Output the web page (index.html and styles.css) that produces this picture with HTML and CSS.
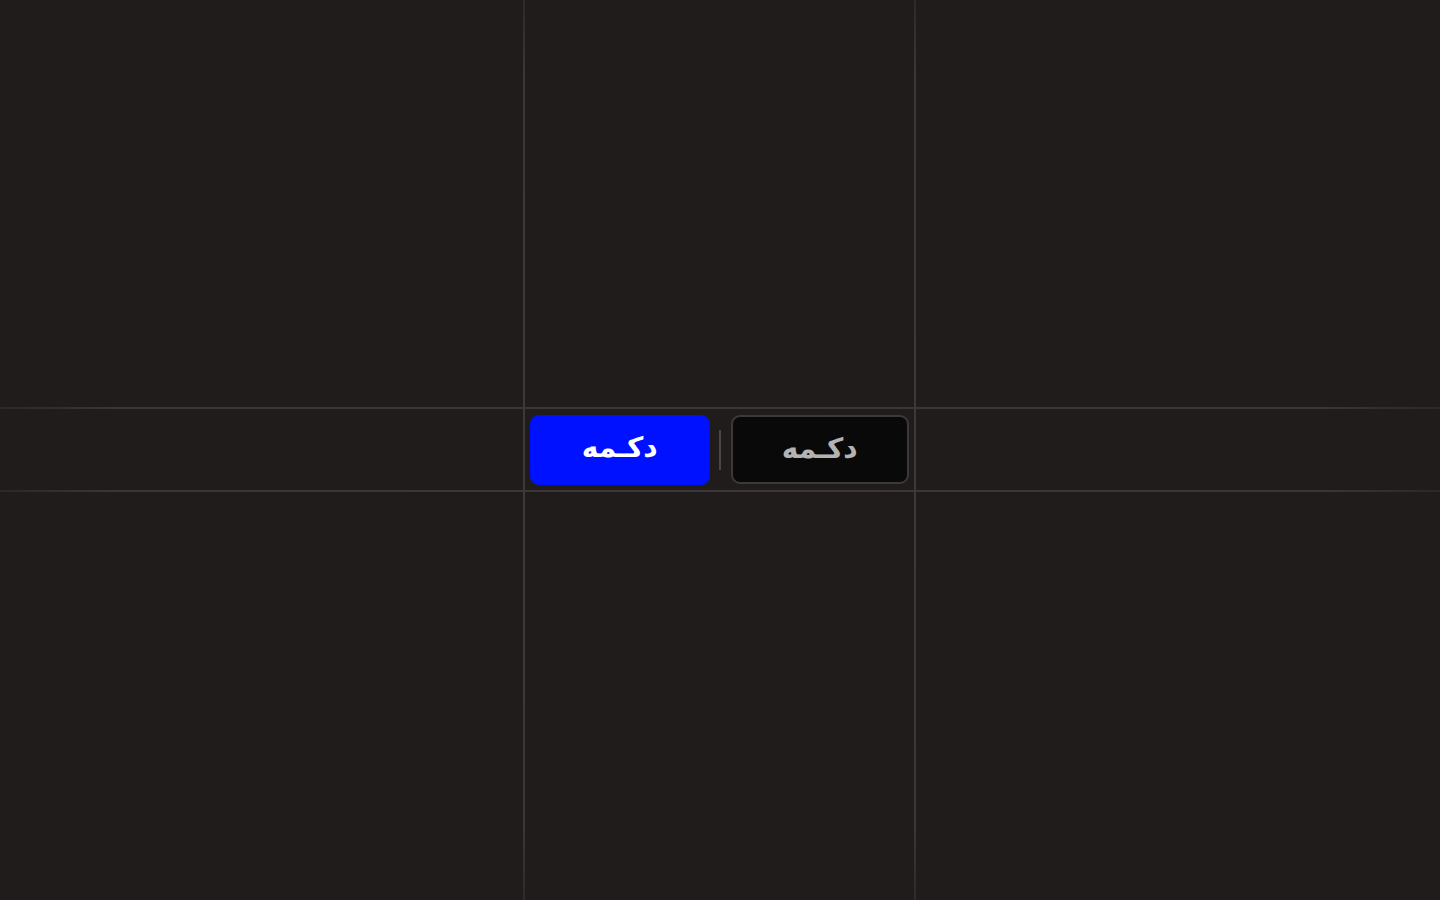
FILE: index.html
```html
<!DOCTYPE html>
<html lang="fa" dir="ltr">
<head>
<meta charset="utf-8">
<title>دکمه</title>
<link rel="stylesheet" href="styles.css">
</head>
<body>
<div class="stage">
  <div class="line-h line-top"></div>
  <div class="line-h line-bottom"></div>
  <div class="line-v line-left"></div>
  <div class="line-v line-right"></div>
  <div class="toolbar">
    <button class="btn btn-primary" dir="rtl">دکـمه</button>
    <span class="sep"></span>
    <button class="btn btn-dark" dir="rtl">دکـمه</button>
  </div>
</div>
</body>
</html>
```

FILE: styles.css
```css
html, body {
  margin: 0;
  padding: 0;
  height: 100%;
  background: #201c1b;
}
.stage {
  height: 900px;
  display: grid;
  grid-template-columns: 523px 2px 389px 2px 1fr;
  grid-template-rows: 407px 2px 81px 2px 1fr;
  background: #201c1b;
}
.line-h {
  grid-column: 1 / -1;
  background: linear-gradient(90deg, #2c2827 0%, #3a3635 8%, #3b3736 50%, #3a3635 92%, #2c2827 100%);
}
.line-top { grid-row: 2; }
.line-bottom { grid-row: 4; }
.line-v {
  grid-row: 1 / -1;
  background: linear-gradient(180deg, #2e2a29 0%, #3b3736 8%, #3d3938 50%, #3b3736 92%, #2e2a29 100%);
}
.line-left { grid-column: 2; }
.line-right { grid-column: 4; }
.toolbar {
  grid-column: 3;
  grid-row: 3;
  display: flex;
  align-items: center;
  padding: 0 5px;
  gap: 9px;
}
.btn {
  width: 180px;
  height: 70px;
  border-radius: 9px;
  font-family: "DejaVu Sans", sans-serif;
  font-weight: bold;
  font-size: 28px;
  line-height: 1;
  display: flex;
  align-items: center;
  justify-content: center;
  padding: 0 0 4px 0;
  box-sizing: border-box;
  cursor: pointer;
}
.btn-primary {
  background: #0011ff;
  color: #ffffff;
  border: none;
}
.btn-dark {
  width: 179px;
  height: 69px;
  background: #0a0909;
  color: #b4b2b2;
  border: 2px solid #3c3939;
  padding-bottom: 2px;
}
.sep {
  width: 2px;
  height: 40px;
  background: #4a4747;
  margin: 0 1px 0 0;
}
```
